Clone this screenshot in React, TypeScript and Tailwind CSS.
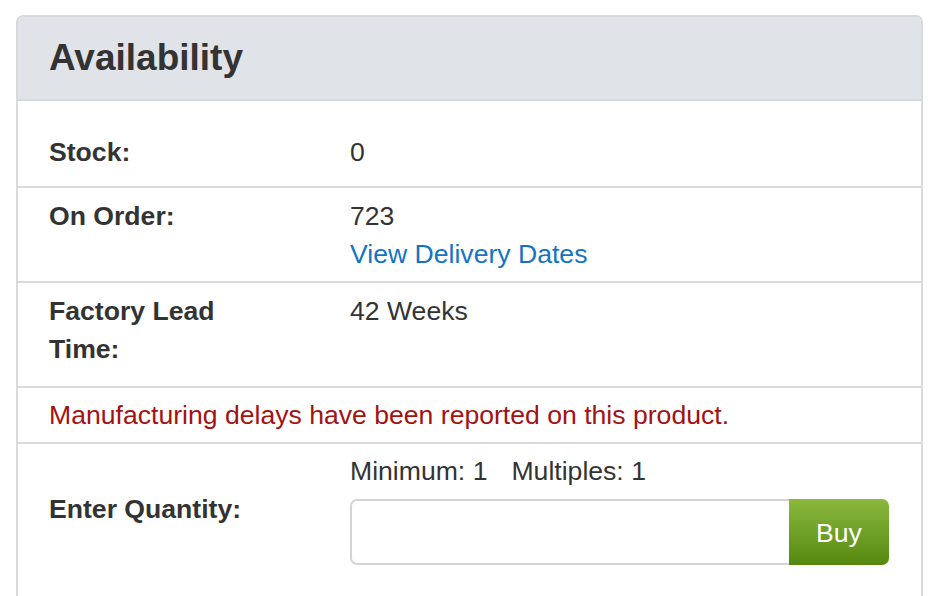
import React from "react";

export default function App() {
  const font = { fontFamily: '"Liberation Sans", Arial, sans-serif' };
  return (
    <div className="w-[939px] h-[596px] overflow-hidden bg-white pl-[16px] pr-[16px] pt-[15px]" style={font}>
      <div className="border-2 border-[#dadada] rounded-[7px] overflow-hidden text-[#333333] h-[620px]">
        <div className="bg-[#e0e3e7] border-b-2 border-[#d6d8db] pl-[31px] pt-[21px] pb-[21px]">
          <h2 className="text-[37px] leading-[40px] font-bold">Availability</h2>
        </div>
        <div className="grid grid-cols-[215px_1fr] gap-x-[86px] pl-[31px] pr-[32px] pt-[32px] pb-[15px] text-[26.6px] leading-[38px] border-b-2 border-[#dadada]">
          <div className="font-bold">Stock:</div>
          <div>0</div>
        </div>
        <div className="grid grid-cols-[215px_1fr] gap-x-[86px] pl-[31px] pr-[32px] pt-[9px] pb-[8px] text-[26.6px] leading-[38px] border-b-2 border-[#dadada]">
          <div className="font-bold">On Order:</div>
          <div>
            <div>723</div>
            <a className="text-[#1474c4]" href="#">View Delivery Dates</a>
          </div>
        </div>
        <div className="grid grid-cols-[215px_1fr] gap-x-[86px] pl-[31px] pr-[32px] pt-[9px] pb-[18px] text-[26.6px] leading-[38px] border-b-2 border-[#dadada]">
          <div className="font-bold">Factory Lead Time:</div>
          <div>42 Weeks</div>
        </div>
        <div className="pl-[31px] pr-[32px] pt-[8px] pb-[8px] text-[26.6px] leading-[38px] border-b-2 border-[#dadada] text-[#a31212]">
          Manufacturing delays have been reported on this product.
        </div>
        <div className="grid grid-cols-[215px_1fr] gap-x-[86px] pl-[31px] pr-[32px] pt-[8px] pb-[20px] text-[26.6px] leading-[38px]">
          <div className="font-bold pt-[38px]">Enter Quantity:</div>
          <div>
            <div>
              Minimum: 1<span className="inline-block w-[24px]"></span>Multiples: 1
            </div>
            <div className="flex mt-[9px] h-[66px]">
              <input
                className="flex-1 min-w-0 border-2 border-r-0 border-[#d4d4d4] rounded-l-[7px] outline-none px-3"
                type="text"
              />
              <button className="w-[100px] rounded-r-[7px] bg-gradient-to-b from-[#8ab93c] to-[#56880e] text-white text-[26.6px] pt-[2px]">
                Buy
              </button>
            </div>
          </div>
        </div>
      </div>
    </div>
  );
}
